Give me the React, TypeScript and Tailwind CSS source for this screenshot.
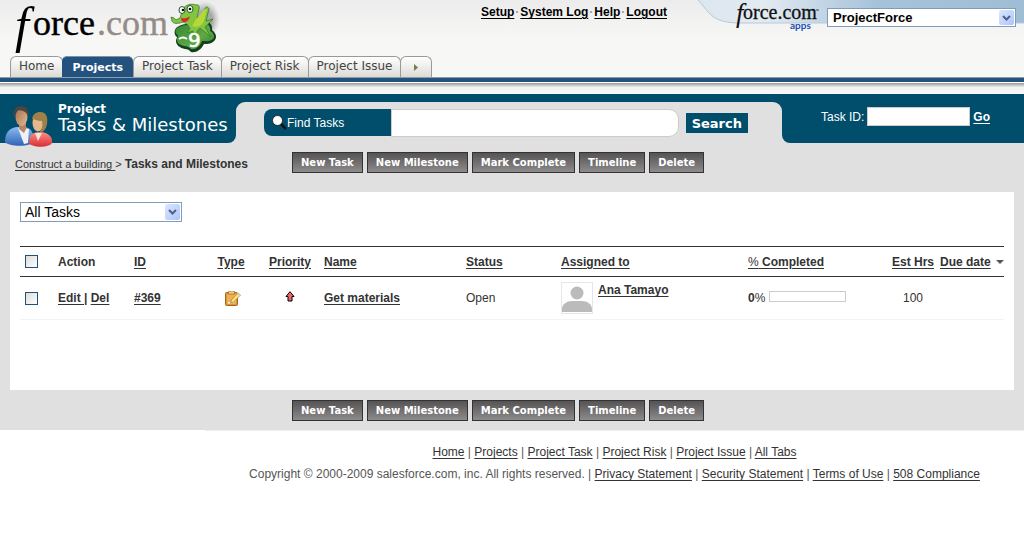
import React from "react";

const ARIAL = "font-['Liberation_Sans',Arial,sans-serif]";
const VERDANA = "font-['DejaVu_Sans',Verdana,sans-serif]";

function Logo() {
  return (
    <svg className="h-14 w-[220px] shrink-0 overflow-visible" viewBox="0 0 220 56" role="img" aria-label="force.com">
      <defs>
        <radialGradient id="shadow">
          <stop offset="0.5" stopColor="#777" stopOpacity="0.6" />
          <stop offset="1" stopColor="#999" stopOpacity="0" />
        </radialGradient>
        <linearGradient id="leaf" x1="0" y1="0" x2="1" y2="1">
          <stop offset="0" stopColor="#2f8434" />
          <stop offset="0.6" stopColor="#5fa944" />
          <stop offset="1" stopColor="#2d7a32" />
        </linearGradient>
      </defs>
      <g fontFamily="'Liberation Serif', 'Times New Roman', serif">
        <text x="15" y="42" fontSize="50" fontStyle="italic" fill="#000">f</text>
        <text x="33" y="35" fontSize="36" fill="#000" stroke="#000" strokeWidth="0.4">orce</text>
        <text x="97" y="35" fontSize="36" fill="#968c87" stroke="#968c87" strokeWidth="0.4">.com</text>
      </g>
      <ellipse cx="205" cy="20" rx="15" ry="19" fill="url(#shadow)" />
      <path d="M176 28c5-4 11-5 16-3l13-5c5 2 8 6 7 10 4 3 5 7 3 10-3 4-7 4-11 4-3 6-8 9-13 8-2-2-3-3-6-3-5-1-9-4-9-8 0-2 1-3 1-4-3-2-3-6-1-9z" fill="#12401f" />
      <path d="M177 28c5-3 10-4 15-2l13-4c4 2 6 6 5 9 4 2 5 6 3 8-3 3-7 2-11 2-2 6-7 9-11 8-2-2-4-3-7-3-4-1-7-3-7-6 0-2 1-3 1-5-3-1-3-5-1-7z" fill="url(#leaf)" />
      <path d="M189 27c-1-3-4-4-6-5-5 2-10 2-11-1l-1-4 3 1 2 2 4-2 3-9c2-4 8-6 13-4 2-1 4 1 3 4l-2 9 5-1 3-8c1-4 4-1 4 0l-3 12 7-2-8 8 6 10-11-9-3 3 1 6-2-4-2 3-1-5-6 2 3-4z" fill="#83c440" stroke="#397c2e" strokeWidth="0.8" />
      <path d="M196 19c5-4 7-11 11-10l-3 12c-2 5-8 7-12 5z" fill="#b7d737" />
      <path d="M181 18c4 1 7 0 9-2-1 4-3 6-6 6-2 0-3-2-3-4z" fill="#df2424" />
      <ellipse cx="182" cy="10" rx="3" ry="3.5" fill="#fff" stroke="#26572a" />
      <ellipse cx="190" cy="9" rx="3" ry="3.5" fill="#fff" stroke="#26572a" />
      <circle cx="183" cy="10" r="1.3" />
      <circle cx="190" cy="9" r="1.3" />
      <path d="M179 39q4-3 8 0" stroke="#fff" strokeWidth="2" fill="none" />
      <text x="188" y="47" fontFamily="'DejaVu Sans', sans-serif" fontSize="20" fill="#fff" stroke="#fff" strokeWidth="0.6">9</text>
    </svg>
  );
}

function AppsLogo() {
  return (
    <svg className="h-8 w-[92px] shrink-0 overflow-visible" viewBox="0 0 92 32" role="img" aria-label="force.com apps">
      <g fontFamily="'Liberation Serif', 'Times New Roman', serif" fill="#111">
        <text x="4" y="22" fontSize="27" fontStyle="italic">f</text>
        <text x="11" y="19" fontSize="20" stroke="#111" strokeWidth="0.3">orce.com</text>
      </g>
      <path d="M84 10h3" stroke="#444" />
      <text x="58" y="29" fontFamily="Lato, sans-serif" fontSize="10" fontWeight="bold" fill="#1450b4">apps</text>
    </svg>
  );
}

function People() {
  return (
    <svg className="h-[42px] w-[48px] shrink-0" viewBox="0 0 48 42" aria-hidden="true">
      <defs>
        <linearGradient id="blueCoat" x1="0" y1="0" x2="0" y2="1">
          <stop offset="0" stopColor="#8dbcf0" />
          <stop offset="1" stopColor="#2c63b6" />
        </linearGradient>
        <linearGradient id="redCoat" x1="0" y1="0" x2="0" y2="1">
          <stop offset="0" stopColor="#ff8f87" />
          <stop offset="1" stopColor="#d82f32" />
        </linearGradient>
        <linearGradient id="face" x1="0" y1="0" x2="1" y2="1">
          <stop offset="0" stopColor="#a4704c" />
          <stop offset="1" stopColor="#e3bb94" />
        </linearGradient>
      </defs>
      <path d="M0 36c0-9 4-14 12-15h8c7 1 9 8 9 15-4 5-25 5-29 0z" fill="url(#blueCoat)" />
      <path d="M13 22l6 16 4-1 1-14z" fill="#eef1f6" />
      <path d="M14 17h7v6l-2 4-5-4z" fill="#b98460" />
      <ellipse cx="16.500" cy="11" rx="6" ry="9" fill="url(#face)" />
      <path d="M9 12C7 4 11 0 16 0s9 4 7 10C21 5 16 3 11 5z" fill="#4b4543" />
      <path d="M24 37c0-8 4-11 11-11s13 4 12 11c-3 5-20 5-23 0z" fill="url(#redCoat)" />
      <path d="M30 27l3 8 4-8z" fill="#f7e1d6" />
      <ellipse cx="33" cy="17" rx="5.500" ry="8.500" fill="#e3b88c" />
      <path d="M27 13c1-5 4-7 8-7 7 0 8 6 7 12-1 5-3 8-8 9 3-4 4-7 3-12-5 0-8-2-10-2z" fill="#a08048" />
    </svg>
  );
}

const tabs = ["Home", "Projects", "Project Task", "Project Risk", "Project Issue"];

function Tabs() {
  return (
    <nav className={`flex h-[21px] items-stretch pl-[10px] text-[12px] leading-[19px] text-[#444] ${VERDANA}`}>
      {tabs.map((t) =>
        t === "Projects" ? (
          <a key={t} href="#projects" className="rounded-t-[5px] border-t border-[#7c93ab] bg-[#24527f] px-[10px] text-[11px] leading-[21px] font-bold text-white">
            {t}
          </a>
        ) : (
          <a key={t} href={`#${t}`} className="-mr-px rounded-t-[6px] border border-b-0 border-[#999] bg-linear-to-b from-white to-[#dcdbd5] px-2">
            {t}
          </a>
        ),
      )}
      <button aria-label="All tabs" className="flex w-8 items-center justify-center rounded-t-[6px] border border-b-0 border-[#999] bg-linear-to-b from-white to-[#dcdbd5]">
        <svg className="h-[7px] w-1" viewBox="0 0 4 7" aria-hidden="true">
          <path d="M0 0l4 3.500L0 7z" fill="#737c50" />
        </svg>
      </button>
    </nav>
  );
}

function DropDown({ label, option, bold, wide }: { label: string; option: string; bold?: boolean; wide?: boolean }) {
  return (
    <div className={`relative shrink-0 ${wide ? "w-[189px]" : "w-[162px]"}`}>
      <select
        aria-label={label}
        className={`block w-full appearance-none rounded-none border border-[#7f9db9] bg-white pr-5 text-black ${
          bold ? "h-[19px] pl-[5px] text-[13px] font-bold leading-[17px]" : "h-5 pl-1 text-[14px] leading-[18px]"
        } ${ARIAL}`}
      >
        <option>{option}</option>
      </select>
      <span className="pointer-events-none absolute inset-y-[2px] right-[2px] flex w-[15px] items-center justify-center rounded-[2px] bg-linear-to-br from-[#dce6ff] to-[#adc5f8]">
        <svg className="h-[6px] w-[9px]" viewBox="0 0 9 6" aria-hidden="true">
          <path d="M1 1l3.500 3.500L8 1" fill="none" stroke="#4d6185" strokeWidth="2" />
        </svg>
      </span>
    </div>
  );
}

function ActionButtons() {
  return (
    <div className="flex gap-1">
      {["New Task", "New Milestone", "Mark Complete", "Timeline", "Delete"].map((b) => (
        <button
          key={b}
          className={`h-[21px] border border-[#333] bg-linear-to-b from-[#555354] to-[#8d8b8c] px-2 text-[10px] leading-[19px] font-bold text-white ${VERDANA}`}
        >
          {b}
        </button>
      ))}
    </div>
  );
}

function Check({ label }: { label: string }) {
  return (
    <input
      type="checkbox"
      aria-label={label}
      className="ml-[5px] block size-[13px] appearance-none border border-[#1c5180] bg-linear-to-br from-[#dcdcd7] to-white"
    />
  );
}

function Clipboard() {
  return (
    <svg className="mx-auto ml-[19px] h-[15px] w-[16px]" viewBox="0 0 16 15" role="img" aria-label="Task">
      <rect x="0.500" y="1.500" width="12" height="13" rx="1" fill="#d99638" stroke="#a9661a" />
      <path d="M2 3h9v10H2z" fill="#e9b259" />
      <path d="M4 0h5l1 3H3z" fill="#f5d48f" stroke="#a9661a" strokeWidth="0.800" />
      <path d="M3 12l5-1 2-2" stroke="#fff2d0" strokeWidth="1.500" fill="none" />
      <path d="M13 2l2.500 2-7 7-3 1 1-3z" fill="#ffe88a" stroke="#b17824" strokeWidth="0.800" />
      <path d="M13 2l2.500 2-1.500 1.500-2.500-2z" fill="#ded3b1" />
    </svg>
  );
}

const links = "underline underline-offset-2";

export default function App() {
  return (
    <div className={`min-h-screen bg-white text-[12px] leading-4 text-[#333] ${ARIAL}`}>
      <header className="bg-linear-to-b from-[#ececec] via-[#f7f7f6] to-[#f7f7f5]">
        <div className="flex h-14 items-start">
          <Logo />
          <nav className="mr-[31px] ml-auto flex gap-px pt-1 font-bold text-black">
            {["Setup", "System Log", "Help", "Logout"].map((l, i) => (
              <React.Fragment key={l}>
                {i > 0 && <span className="text-[#999]">·</span>}
                <a href={`#${l}`} className={links}>{l}</a>
              </React.Fragment>
            ))}
          </nav>
          <div className="relative flex w-[326px] shrink-0 items-start pl-[34px]">
            <svg className="absolute inset-x-0 top-0 h-6 w-full" viewBox="0 0 326 24" preserveAspectRatio="none" aria-hidden="true">
              <defs>
                <linearGradient id="swoosh">
                  <stop offset="0" stopColor="#dce6ef" />
                  <stop offset="0.2" stopColor="#e3ebf2" />
                  <stop offset="0.55" stopColor="#a5c2d9" />
                  <stop offset="1" stopColor="#9fbed6" />
                </linearGradient>
              </defs>
              <path d="M0 0c11 11 12 23 42 23h284V0z" fill="url(#swoosh)" />
              <path d="M0 0c11 11 12 23 42 23h284" fill="none" stroke="#b7cad9" />
            </svg>
            <div className="relative flex items-start gap-[3px]">
              <AppsLogo />
              <div className="pt-2">
                <DropDown label="Application" option="ProjectForce" bold wide />
              </div>
            </div>
          </div>
        </div>
        <Tabs />
      </header>
      <div className="h-[6px] border-t border-b border-t-[#8d9caa] border-b-white bg-[#24527f]" />
      <div className="h-[11px] bg-linear-to-b from-[#999] via-[#f4f4f4] via-40% to-[#f8f8f8]" />

      <main className="bg-[#e0e0e0] pb-[9px]">
        <div className="h-2 bg-[#004e6b]" />
        <div className="flex h-[41px]">
          <div className="flex w-[236px] shrink-0 items-start gap-[5px] rounded-br-[8px] bg-[#004e6b] pl-[5px] text-white">
            <div className="pt-1"><People /></div>
            <h1 className={`font-normal ${VERDANA}`}>
              <span className="block text-[12px] leading-[14px] font-semibold">Project</span>
              <span className="block text-[18px] leading-[18px] whitespace-nowrap">Tasks &amp; Milestones</span>
            </h1>
          </div>
          <div className="min-w-0 flex-1 bg-[linear-gradient(#004e6b_12px,#e0e0e0_12px)]">
            <form className="flex h-full items-start rounded-t-[9px] bg-[#e0e0e0] pt-[7px] pr-[34px] pl-7" onSubmit={(e) => e.preventDefault()}>
              <label htmlFor="find" className="flex h-[27px] w-[127px] shrink-0 items-center rounded-l-[8px] bg-[#004e6b] pl-2 text-white">
                <svg className="size-[15px]" viewBox="0 0 15 15" aria-hidden="true">
                  <path d="M9 9l5 5" stroke="#111" strokeWidth="2.500" />
                  <circle cx="5.500" cy="5.500" r="5" fill="#fff" stroke="#111" strokeWidth="0.800" />
                </svg>
                Find Tasks
              </label>
              <input id="find" className="h-7 min-w-0 flex-1 rounded-r-[10px] border border-[#ccc] bg-white px-2" />
              <button className={`mt-1 ml-[7px] h-5 bg-[#004e6b] px-[6px] pt-[2px] text-[13px] leading-[18px] font-bold text-white ${VERDANA}`}>Search</button>
            </form>
          </div>
          <form className="flex w-[242px] shrink-0 items-start gap-[3px] rounded-bl-[8px] bg-[#004e6b] pt-[5px] pl-[39px] text-white" onSubmit={(e) => e.preventDefault()}>
            <label htmlFor="taskid" className="pt-[2px]">Task ID:</label>
            <input id="taskid" className="h-[19px] w-[103px] border border-[#ccc] bg-white px-1 text-black" />
            <a href="#go" className={`pt-[2px] font-bold ${links}`}>Go</a>
          </form>
        </div>

        <div className="flex items-start pt-[9px] pb-[19px]">
          <p className="w-[292px] shrink-0 pt-1 pl-[15px] text-[11px]">
            <a href="#building" className={links}>Construct a building </a>&gt; <b className="text-[12px]">Tasks and Milestones</b>
          </p>
          <ActionButtons />
        </div>

        <section className="mx-[10px] bg-white px-[10px] pt-[10px] pb-[70px]">
          <DropDown label="Filter" option="All Tasks" />
          <table className="mt-6 w-full table-fixed border-collapse text-left">
            <colgroup>
              <col className="w-[38px]" />
              <col className="w-[76px]" />
              <col className="w-[72px]" />
              <col className="w-[50px]" />
              <col className="w-[68px]" />
              <col />
              <col className="w-[95px]" />
              <col className="w-[187px]" />
              <col className="w-[140px]" />
              <col className="w-[50px]" />
              <col className="w-[66px]" />
            </colgroup>
            <thead>
              <tr className="h-[30px] border-y border-[#333]">
                <th><Check label="Select all" /></th>
                <th>Action</th>
                <th><a href="#id" className={links}>ID</a></th>
                <th className="text-center"><a href="#type" className={links}>Type</a></th>
                <th className="text-center"><a href="#priority" className={links}>Priority</a></th>
                <th><a href="#name" className={links}>Name</a></th>
                <th><a href="#status" className={links}>Status</a></th>
                <th><a href="#assigned" className={links}>Assigned to</a></th>
                <th><a href="#completed" className={links}><span className="font-normal">%</span> Completed</a></th>
                <th className="text-center whitespace-nowrap"><a href="#hours" className={links}>Est Hrs</a></th>
                <th className="whitespace-nowrap">
                  <span className="flex items-center justify-between pl-[2px]">
                    <a href="#due" className={links}>Due date</a>
                    <svg className="h-1 w-2" viewBox="0 0 8 4" aria-hidden="true"><path d="M0 0h8L4 4z" fill="#555" /></svg>
                  </span>
                </th>
              </tr>
            </thead>
            <tbody>
              <tr className="h-[43px] border-b border-[#f3f3f3]">
                <td><Check label="Select #369" /></td>
                <td className="font-bold"><a href="#edit" className={links}>Edit </a>| <a href="#del" className={links}>Del</a></td>
                <td className="font-bold"><a href="#369" className={links}>#369</a></td>
                <td><Clipboard /></td>
                <td>
                  <svg className="mx-auto mb-1 block h-[11px] w-[10px]" viewBox="0 0 10 11" role="img" aria-label="High">
                    <path d="M5 .700L9 5.500H7v4.500H3V5.500H1z" fill="#f06668" stroke="#000" />
                  </svg>
                </td>
                <td className="font-bold"><a href="#materials" className={links}>Get materials</a></td>
                <td>Open</td>
                <td>
                  <div className="flex gap-[5px]">
                    <svg className="size-8 shrink-0" viewBox="0 0 32 32" aria-hidden="true">
                      <rect x="0.500" y="0.500" width="31" height="31" fill="#fff" stroke="#e6e6e6" />
                      <circle cx="16" cy="11" r="6.500" fill="#bbb" />
                      <path d="M1 30v-3c0-5 5-8 10-8h10c5 0 10 3 10 8v3z" fill="#bbb" />
                    </svg>
                    <a href="#ana" className={`font-bold ${links}`}>Ana Tamayo</a>
                  </div>
                </td>
                <td>
                  <div className="flex items-center gap-1">
                    <span><b>0</b>%</span>
                    <div role="progressbar" aria-label="Completed" aria-valuenow={0} className="mb-1 h-[11px] w-[77px] border border-[#ccc]" />
                  </div>
                </td>
                <td className="text-center">100</td>
                <td />
              </tr>
            </tbody>
          </table>
        </section>

        <div className="pt-[10px] pl-[292px]"><ActionButtons /></div>
      </main>

      <footer className="ml-[205px] border-t border-[#eee] pt-[10px] text-center leading-[22px] text-[#555]">
        <p>
          {["Home", "Projects", "Project Task", "Project Risk", "Project Issue", "All Tabs"].map((l, i) => (
            <React.Fragment key={l}>
              {i > 0 && " | "}
              <a href={`#${l}`} className={`text-[#333] ${links}`}>{l}</a>
            </React.Fragment>
          ))}
        </p>
        <p>
          Copyright © 2000-2009 salesforce.com, inc. All rights reserved.
          {["Privacy Statement", "Security Statement", "Terms of Use", "508 Compliance"].map((l) => (
            <React.Fragment key={l}>
              {" | "}
              <a href={`#${l}`} className={`text-[#333] ${links}`}>{l}</a>
            </React.Fragment>
          ))}
        </p>
      </footer>
    </div>
  );
}
